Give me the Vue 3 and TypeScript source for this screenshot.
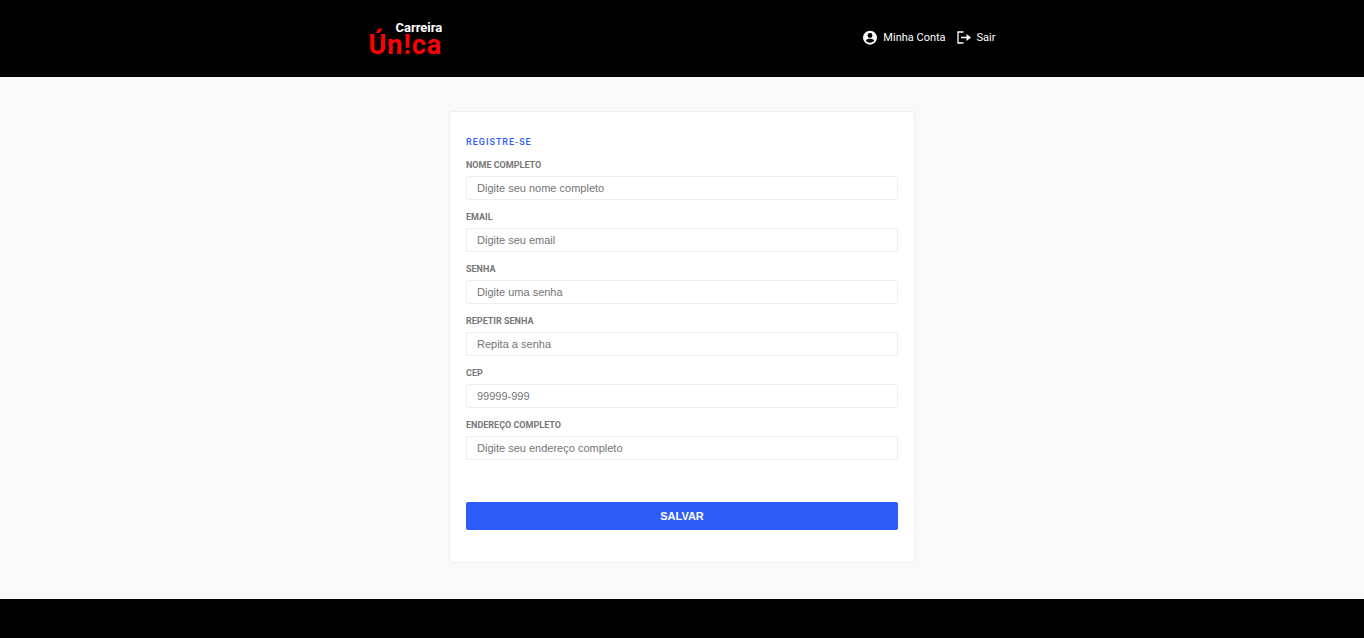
<script setup lang="ts">
import { reactive } from 'vue'

interface Field {
  id: string
  label: string
  type: string
  placeholder: string
}

const fields: Field[] = [
  { id: 'nome', label: 'Nome completo', type: 'text', placeholder: 'Digite seu nome completo' },
  { id: 'email', label: 'Email', type: 'email', placeholder: 'Digite seu email' },
  { id: 'senha', label: 'Senha', type: 'password', placeholder: 'Digite uma senha' },
  { id: 'repetir', label: 'Repetir senha', type: 'password', placeholder: 'Repita a senha' },
  { id: 'cep', label: 'CEP', type: 'text', placeholder: '99999-999' },
  { id: 'endereco', label: 'Endereço completo', type: 'text', placeholder: 'Digite seu endereço completo' },
]

const values = reactive<Record<string, string>>({})
</script>

<template>
  <div class="page">
    <header class="header">
      <div class="header-inner">
        <a href="#" class="logo">
          <span class="logo-top">Carreira</span>
          <span class="logo-main">Ún!ca</span>
        </a>
        <nav class="menu">
          <a href="#">
            <svg width="16" height="16" viewBox="0 0 24 24" aria-hidden="true">
              <path fill="currentColor" fill-rule="evenodd" d="M12 1a10.500 10.500 0 1 0 0 21 10.500 10.500 0 0 0 0-21zM12 4.500a3.700 3.700 0 1 1 0 7.400A3.700 3.700 0 0 1 12 4.500zm0 14.500c-2.700 0-5-1.200-6.200-3.200C5.800 14 10 13.300 12 13.300s6.200.7 6.200 2.500C17 17.800 14.700 19 12 19z" />
            </svg>
            Minha Conta
          </a>
          <a href="#">
            <svg width="16" height="16" viewBox="0 0 16 16" aria-hidden="true">
              <path fill="none" stroke="currentColor" stroke-width="1.3" d="M7.500 2H2v11h5.500" />
              <path fill="currentColor" d="M5 6.700h5.500V4L15 7.500 10.500 11V8.300H5z" />
            </svg>
            Sair
          </a>
        </nav>
      </div>
    </header>

    <main class="main">
      <form class="card" @submit.prevent>
        <h1>Registre-se</h1>
        <div class="fields">
          <div v-for="f in fields" :key="f.id" class="field">
            <label :for="f.id">{{ f.label }}</label>
            <input :id="f.id" v-model="values[f.id]" :type="f.type" :placeholder="f.placeholder" />
          </div>
        </div>
        <button type="submit">SALVAR</button>
      </form>
    </main>

    <footer class="footer"></footer>
  </div>
</template>

<style>
body {
  background: #f9f9f9;
}
</style>

<style scoped>
.page {
  display: flex;
  flex-direction: column;
  min-height: 100vh;
  background: #f9f9f9;
  font-family: Roboto, "Liberation Sans", sans-serif;
}
.page * {
  box-sizing: border-box;
}
.header {
  background: #000;
  padding: 19px 16px 21px;
}
.header-inner {
  display: flex;
  justify-content: space-between;
  align-items: center;
  max-width: 627px;
  min-height: 37px;
  margin: 0 auto;
}
.logo {
  display: flex;
  flex-direction: column;
  align-items: flex-end;
  font-weight: 700;
  text-decoration: none;
}
.logo-top {
  color: #fff;
  font-size: 13px;
  line-height: 14px;
}
.logo-main {
  color: #f00;
  font-size: 27px;
  line-height: 20px;
  letter-spacing: 1px;
}
.menu {
  display: flex;
  gap: 10px;
}
.menu a {
  display: flex;
  align-items: center;
  gap: 5px;
  color: #fff;
  font-size: 11px;
  line-height: 16px;
  text-decoration: none;
}
.main {
  flex: 1;
  padding: 34px 16px 36px;
}
.card {
  max-width: 466px;
  margin: 0 auto;
  padding: 24px 16px 32px;
  background: #fff;
  border: 1px solid #eee;
  border-radius: 4px;
}
h1 {
  margin: 0 0 10px;
  color: #2e5cf9;
  font-size: 9px;
  font-weight: 500;
  line-height: 12px;
  letter-spacing: 1px;
  text-transform: uppercase;
}
.fields {
  display: grid;
  gap: 10px;
}
.field {
  display: grid;
  gap: 4px;
}
label {
  color: #777;
  font-size: 9px;
  font-weight: 700;
  line-height: 14px;
  text-transform: uppercase;
}
input {
  width: 100%;
  height: 24px;
  padding: 0 10px;
  border: 1px solid #eee;
  border-radius: 2px;
  background: #fff;
  color: #666;
  font-family: "Liberation Sans", Arial, sans-serif;
  font-size: 11px;
}
input::placeholder {
  color: #757575;
  opacity: 1;
}
button {
  display: block;
  width: 100%;
  height: 28px;
  margin-top: 42px;
  padding: 0;
  border: 0;
  border-radius: 2px;
  background: #2e5cf9;
  color: #fff;
  font-family: "Liberation Sans", Arial, sans-serif;
  font-size: 11px;
  font-weight: 700;
  cursor: pointer;
}
.footer {
  height: 39px;
  background: #000;
}
</style>
